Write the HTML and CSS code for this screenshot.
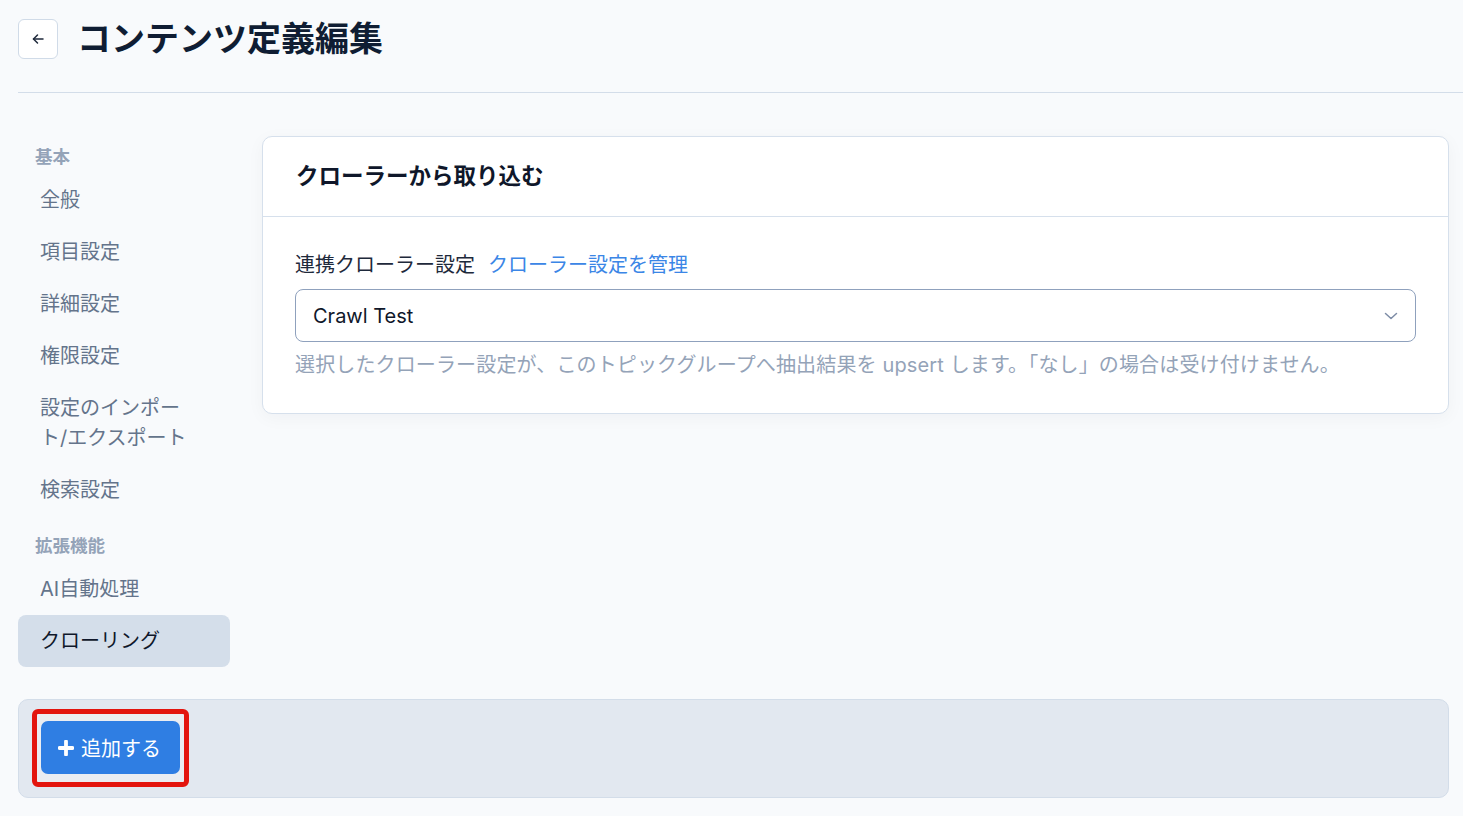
FILE: index.html
```html
<!DOCTYPE html>
<html lang="ja">
<head>
  <meta charset="UTF-8">
  <meta name="viewport" content="width=device-width, initial-scale=1.0">
  <title>コンテンツ定義編集</title>
  <link rel="stylesheet" href="styles.css">
</head>
<body>

  <div class="page">
    <!-- ヘッダー -->
    <header class="page-header">
      <button class="back-btn" type="button" aria-label="戻る">
        <svg width="16" height="16" viewBox="0 0 16 16" fill="none" stroke="#1e293b" stroke-width="1.5" stroke-linecap="round" stroke-linejoin="round">
          <path d="M13 8H3.5"/>
          <path d="M7.5 4L3.5 8l4 4"/>
        </svg>
      </button>
      <h1 class="page-title">コンテンツ定義編集</h1>
    </header>

    <div class="layout">
      <!-- サイドメニュー -->
      <nav class="sidebar">
        <div class="side-label">基本</div>
        <a class="side-item">全般</a>
        <a class="side-item">項目設定</a>
        <a class="side-item">詳細設定</a>
        <a class="side-item">権限設定</a>
        <a class="side-item">設定のインポート/エクスポート</a>
        <a class="side-item">検索設定</a>
        <div class="side-label">拡張機能</div>
        <a class="side-item">AI自動処理</a>
        <a class="side-item active">クローリング</a>
      </nav>

      <!-- メイン -->
      <main class="content">
        <section class="card">
          <div class="card-header">
            <h2 class="card-title">クローラーから取り込む</h2>
          </div>
          <div class="card-body">
            <div class="field-label">
              <span>連携クローラー設定</span>
              <a class="link">クローラー設定を管理</a>
            </div>
            <div class="select">
              <span>Crawl Test</span>
              <svg width="14" height="8" viewBox="0 0 14 8" fill="none" stroke="#7d8ca6" stroke-width="1.5" stroke-linecap="round" stroke-linejoin="round">
                <path d="M1.5 1.5L7 6.5l5.5-5"/>
              </svg>
            </div>
            <p class="help">選択したクローラー設定が、このトピックグループへ抽出結果を upsert します。「なし」の場合は受け付けません。</p>
          </div>
        </section>
      </main>
    </div>

    <!-- フッター操作 -->
    <div class="action-bar">
      <div class="highlight">
        <button class="add-btn" type="button">
          <svg width="16" height="16" viewBox="0 0 16 16" fill="none" stroke="#fff" stroke-width="3.8" stroke-linecap="round">
            <path d="M8 1.5v13M1.5 8h13"/>
          </svg>
          追加する
        </button>
      </div>
    </div>
  </div>

</body>
</html>
```

FILE: styles.css
```css
body {
  margin: 0;
  padding: 0;
  background-color: #f8fafc;
  font-family: Inter, "Noto Sans CJK JP", sans-serif;
  color: #0f172a;
}

.page {
  padding: 19px 14px 0 18px;
}

/* ヘッダー */
.page-header {
  display: flex;
  align-items: center;
  gap: 19px;
  height: 40px;
  padding-bottom: 33px;
  margin-right: -14px;
  border-bottom: 1px solid #d3dde9;
}

.back-btn {
  width: 40px;
  height: 40px;
  display: flex;
  align-items: center;
  justify-content: center;
  background-color: #fff;
  border: 1px solid #d0dbe8;
  border-radius: 6px;
  padding: 0;
  cursor: pointer;
}

.page-title {
  margin: 0;
  font-size: 34px;
  line-height: 40px;
  font-weight: 700;
  color: #0f1d33;
}

.layout {
  display: flex;
  gap: 32px;
  margin-top: 43px;
}

/* サイドメニュー */
.sidebar {
  width: 212px;
  flex-shrink: 0;
  display: flex;
  flex-direction: column;
}

.side-label {
  font-size: 17.5px;
  line-height: 22px;
  font-weight: 700;
  color: #94a3b8;
  padding: 0 17px;
  margin: 19px 0 6px;
}

.side-label:first-child {
  margin-top: 10px;
  margin-bottom: 6px;
}

.side-item {
  font-size: 20px;
  line-height: 30px;
  color: #64748b;
  padding: 11px 36px 11px 22px;
  border-radius: 8px;
  cursor: pointer;
}

.side-item.active {
  background-color: #d4deea;
  color: #0f172a;
}

/* カード */
.content {
  flex: 1;
  min-width: 0;
}

.card {
  background-color: #fff;
  border: 1px solid #d6e0ec;
  border-radius: 10px;
  box-shadow: 0 4px 18px rgba(15, 23, 42, 0.04);
}

.card-header {
  padding: 23px 33px 24px;
  border-bottom: 1px solid #d6e0ec;
}

.card-title {
  margin: 0;
  font-size: 22.5px;
  line-height: 32px;
  font-weight: 700;
  color: #0f172a;
}

.card-body {
  padding: 33px 32px 33px 32px;
}

.field-label {
  display: flex;
  gap: 13px;
  font-size: 20px;
  line-height: 30px;
  color: #1e293b;
  margin-bottom: 9px;
}

.link {
  color: #3b86e6;
  cursor: pointer;
}

.select {
  display: flex;
  align-items: center;
  justify-content: space-between;
  padding: 10.5px 17px 10.5px 17px;
  border: 1px solid #8fa1bd;
  border-radius: 8px;
  font-size: 20px;
  line-height: 30px;
  color: #0f172a;
}

.help {
  margin: 8px 0 0;
  font-size: 20px;
  line-height: 30px;
  letter-spacing: 0.14px;
  color: #94a3b8;
}

/* フッター操作 */
.action-bar {
  margin-top: 32px;
  padding: 9px 13px 10px;
  background-color: #e2e8f0;
  border: 1px solid #d3dde9;
  border-radius: 10px;
}

.highlight {
  display: inline-block;
  padding: 7px 4px 8px;
  border: 5px solid #e3150e;
  border-radius: 6px;
  background-color: #eaedf2;
}

.add-btn {
  display: flex;
  align-items: center;
  gap: 7px;
  height: 53px;
  padding: 0 19px 0 17px;
  background-color: #2f7ee3;
  color: #fff;
  border: none;
  border-radius: 7px;
  font-family: inherit;
  font-size: 20px;
  cursor: pointer;
}
```
